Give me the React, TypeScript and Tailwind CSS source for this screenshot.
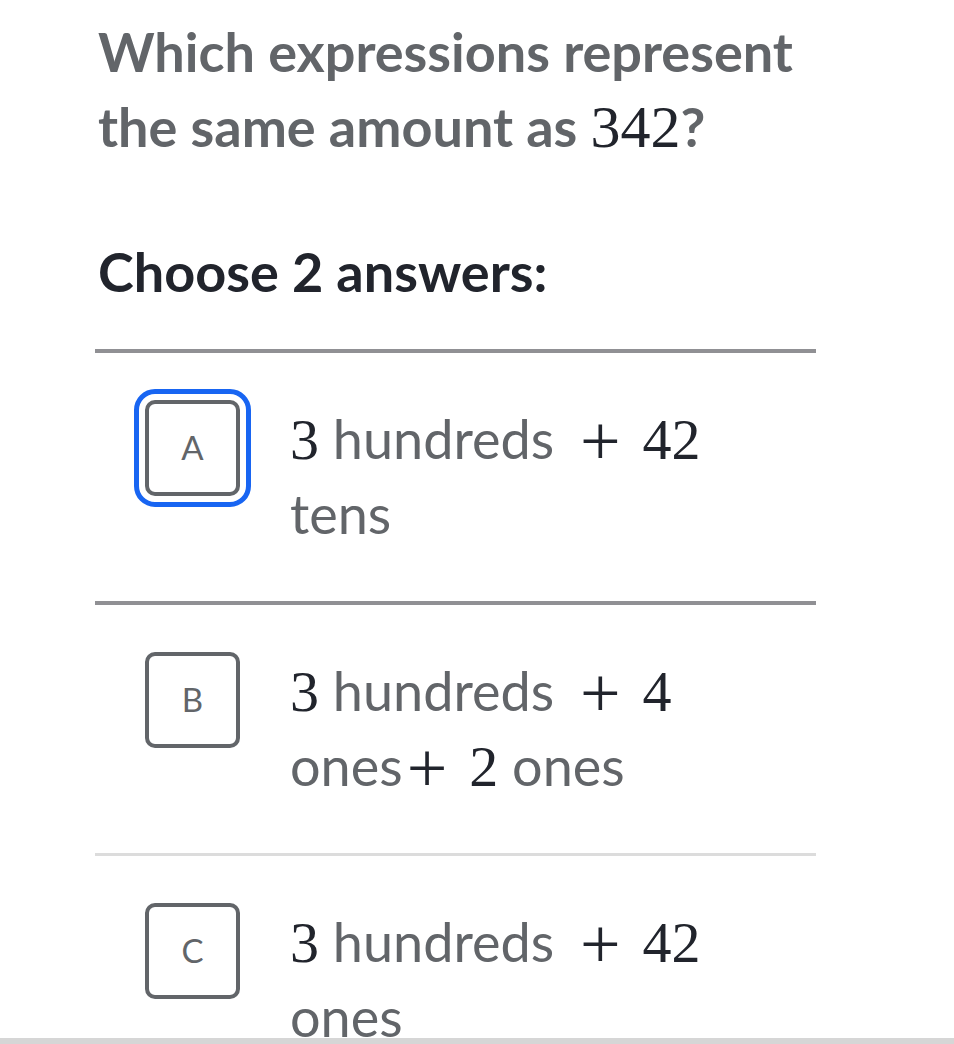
import React from "react";

const lato = "font-['Lato',_'Liberation_Sans',_sans-serif]";
const math = "font-['Liberation_Serif',_'DejaVu_Serif',_serif] font-normal text-[#21242c]";

const Num = ({ children, big }: { children: React.ReactNode; big?: boolean }) => (
  <span className={`${math} ${big ? "text-[60px]" : "text-[58px]"} leading-[0]`}>{children}</span>
);

const Plus = ({ tight }: { tight?: boolean }) => (
  <span
    className={`${math} text-[72px] leading-[0] align-[-6px] ${tight ? "ml-[4px]" : "ml-[12px]"} mr-[22px]`}
  >
    +
  </span>
);

type Row = {
  letter: string;
  focused?: boolean;
  border: string;
  content: React.ReactNode;
};

const rows: Row[] = [
  {
    letter: "A",
    focused: true,
    border: "border-t-4 border-[#909094]",
    content: (
      <>
        <Num>3</Num> hundreds <Plus />
        <Num>42</Num> tens
      </>
    ),
  },
  {
    letter: "B",
    border: "border-t-4 border-[#909094]",
    content: (
      <>
        <Num>3</Num> hundreds <Plus />
        <Num>4</Num> ones
        <Plus tight />
        <Num>2</Num> ones
      </>
    ),
  },
  {
    letter: "C",
    border: "border-t-[3px] border-[#dcdcdc]",
    content: (
      <>
        <Num>3</Num> hundreds <Plus />
        <Num>42</Num> ones
      </>
    ),
  },
];

const App = () => {
  return (
    <div className={`w-[954px] h-[1044px] bg-white flex flex-col overflow-hidden ${lato}`}>
      <div className="flex-1 overflow-hidden">
        <div className="pl-[98px] pt-[14px]">
          <h1 className="text-[54px] leading-[75px] font-bold text-[#626569]">
            Which expressions represent
            <br />
            the same amount as <Num big>342</Num>?
          </h1>
          <p className="mt-[70px] text-[54px] leading-[75px] font-bold text-[#21242c]">
            Choose 2 answers:
          </p>
        </div>

        <div className="ml-[95px] w-[721px] mt-[40px]">
          {rows.map((row) => (
            <div key={row.letter} className={`flex items-start pt-[47px] pb-[50px] ${row.border}`}>
              <div className="ml-[50px] w-[95px] shrink-0">
                <div
                  className={`w-[95px] h-[96px] rounded-[10px] border-4 border-[#626569] flex items-center justify-center text-[33px] text-[#626569] ${
                    row.focused ? "outline-[5px] outline-solid outline-[#1865f2] outline-offset-[6px]" : ""
                  }`}
                >
                  {row.letter}
                </div>
              </div>
              <div className="ml-[50px] mt-[1px] w-[440px] text-[54px] leading-[75px] text-[#626569]">
                {row.content}
              </div>
            </div>
          ))}
        </div>
      </div>
      <div className="h-[6px] bg-[#d6d6d6] shrink-0" />
    </div>
  );
};

export default App;
